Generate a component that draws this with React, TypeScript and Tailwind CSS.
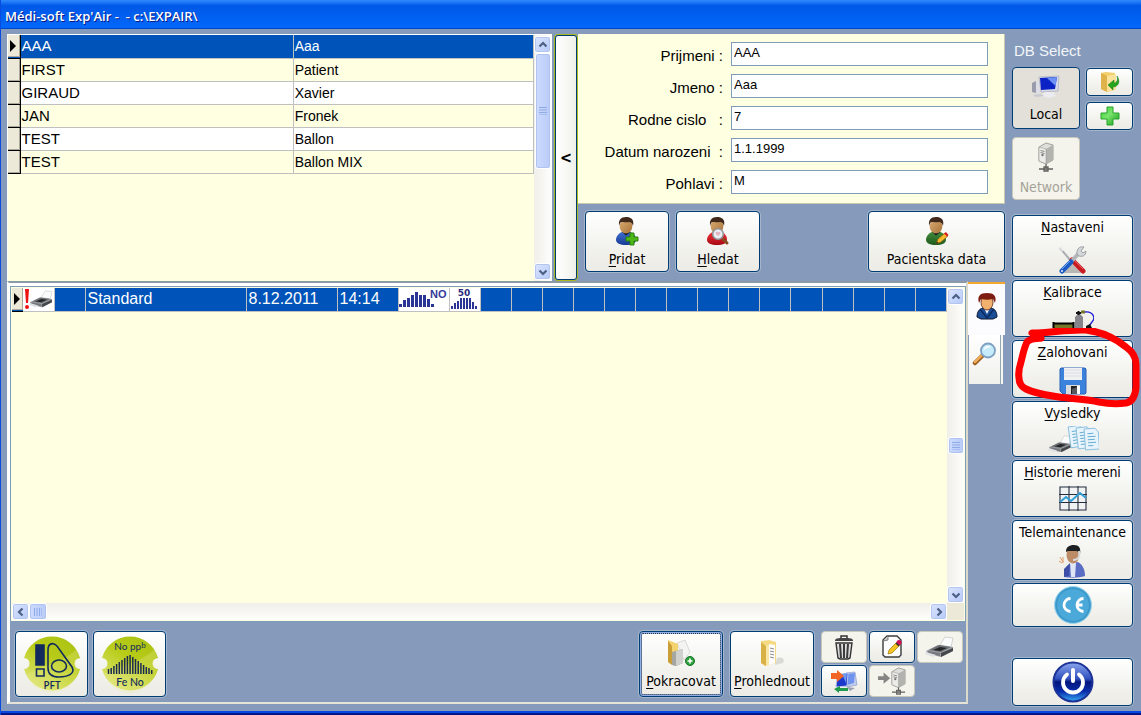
import type { ReactNode } from "react";

const UI_FONT = "font-['DejaVu_Sans_Condensed','DejaVu_Sans',sans-serif]";
const ARIAL = "font-['Liberation_Sans',Arial,sans-serif]";

/* ---------- icons ---------- */

function Person({ shirt, kind }: { shirt: "blue" | "red" | "green"; kind: "add" | "search" | "edit" }) {
  const dark = { blue: "#173a93", red: "#a80812", green: "#1d5a1c" }[shirt];
  const light = { blue: "#3f6fd0", red: "#ee3438", green: "#418a3a" }[shirt];
  return (
    <svg width="28" height="30" viewBox="0 0 28 30" aria-hidden="true">
      <defs>
        <linearGradient id={`shirt-${shirt}`} x1="0" y1="0" x2="0" y2="1">
          <stop offset="0" stopColor={light} />
          <stop offset="1" stopColor={dark} />
        </linearGradient>
        <linearGradient id="skin" x1="0" y1="0" x2="1" y2="1">
          <stop offset="0" stopColor="#d9ab72" />
          <stop offset="1" stopColor="#a87438" />
        </linearGradient>
      </defs>
      <path d="M3 24c0-4 3-7 6-8h8c4 1 6 4 6 8 0 3-4 5-10 5S3 27 3 24z" fill={`url(#shirt-${shirt})`} />
      <path d="M9 16l4 3.500 4.500-3.500z" fill="#151520" />
      <ellipse cx="13" cy="10.500" rx="6.300" ry="7" fill="url(#skin)" />
      <path d="M6.200 10C5 4 8 1 13 1s8.500 2.500 7 9c-1-3-2-4-4-4-3 .5-6 0-7.500 0-1.500.5-2 2-2.300 4z" fill="#40291a" />
      {kind === "add" && (
        <path d="M17 17h4v4h4v4h-4v4h-4v-4h-4v-4h4z" fill="#4db815" stroke="#267c05" strokeWidth=".9" />
      )}
      {kind === "search" && (
        <g>
          <path d="M19 23l4 4" stroke="#8b4b20" strokeWidth="3" strokeLinecap="round" />
          <circle cx="14" cy="18" r="5.300" fill="#eceff2" stroke="#8f9499" strokeWidth="1.600" />
          <path d="M11.500 16.500c1-1.500 2-.8 2.500 0 .7-1 2-1 2.500.2 0 1.500-1.500 2.300-2.500 3.300-1-1-2.500-2-2.500-3.500z" fill="#e3b4c0" />
        </g>
      )}
      {kind === "edit" && (
        <g>
          <path d="M13 28l2-5 7-6 3 3-7 6z" fill="#f8b62c" stroke="#8a6010" strokeWidth=".7" />
          <path d="M21 17.500l2-1.500 2.500 3-1.500 1.500z" fill="#d81f26" />
          <path d="M13 28l1-2.500 1.500 1.500z" fill="#222" />
        </g>
      )}
    </svg>
  );
}

function Computers() {
  return (
    <svg width="30" height="24" viewBox="0 0 30 24" aria-hidden="true">
      <path d="M1 8l4-2v12l-4-1z" fill="#999cab" />
      <path d="M5 6l4 1v11l-4 1z" fill="#dcdde6" />
      <path d="M8 2l20-1-1 15-17 1z" fill="#d5d9e9" stroke="#aeb1c4" strokeWidth=".8" />
      <path d="M9 3l17-1-2 12-14 1z" fill="#0b22c4" />
      <path d="M16 3l10-1-1.500 9z" fill="#6c90f3" />
      <path d="M14 17h8l3 4-7 2-8-2z" fill="#ececf0" />
      <path d="M2 20l8-1 3 2-8 1z" fill="#c9c9d0" />
    </svg>
  );
}

function Server() {
  return (
    <>
      <path d="M4 5l7-4 7 2v15l-7 4-7-3z" fill="#dededb" stroke="#8d8d8a" strokeWidth=".8" />
      <path d="M11 7l7-4v15l-7 4z" fill="#b2b2af" />
      <path d="M4 5l7 2v15l-7-3z" fill="#ebebe8" stroke="#8d8d8a" strokeWidth=".5" />
      <path d="M5.500 8.500l4 1M5.500 10.500l4 1" stroke="#898985" />
      <circle cx="7.500" cy="13" r="1.200" fill="#777" />
      <path d="M11 22v4M4 27h14M9 25h4v4H9z" stroke="#62625f" strokeWidth="1.300" fill="#c7c7c4" />
    </>
  );
}

function FolderArrow() {
  return (
    <svg width="20" height="22" viewBox="0 0 20 22" aria-hidden="true">
      <path d="M1 2l5-1 9 1v17l-8 2-6-3z" fill="#f1cf6d" />
      <path d="M1 2l6 3v16l-6-3z" fill="#dfb34a" />
      <path d="M7 5l9-2v15l-9 3z" fill="#fae29a" />
      <path d="M17 5c4 6 1 11-4 11v3l-5-5 6-5v3c3 0 4-3 3-7z" fill="#25a51d" stroke="#14750f" strokeWidth=".5" />
    </svg>
  );
}

function GreenPlus() {
  return (
    <svg width="20" height="20" viewBox="0 0 20 20" aria-hidden="true">
      <defs>
        <linearGradient id="gp" x1="0" y1="0" x2="1" y2="1">
          <stop offset="0" stopColor="#3ccc3c" />
          <stop offset=".45" stopColor="#79e46b" />
          <stop offset="1" stopColor="#149a1c" />
        </linearGradient>
      </defs>
      <path d="M7 1h6v6h6v6h-6v6H7v-6H1V7h6z" fill="url(#gp)" stroke="#27a32b" strokeLinejoin="round" />
    </svg>
  );
}

function Tools() {
  return (
    <svg width="30" height="28" viewBox="0 0 30 28" aria-hidden="true">
      <path d="M4 27l10-9 10 9z" fill="#77777a" opacity=".45" />
      <path d="M2 2l11 13" stroke="#a9adb3" strokeWidth="2" />
      <path d="M2 1l3 4" stroke="#e9e9ec" strokeWidth="2" />
      <path d="M14 14l11 11" stroke="#c81b22" strokeWidth="5" strokeLinecap="round" />
      <path d="M15 13l10 10" stroke="#ee6062" strokeWidth="1" />
      <path d="M22 6L12 17" stroke="#b2b5ba" strokeWidth="4" />
      <path d="M20 3c2-3 5-2 6-2l-3 4 2 2 3-2c0 5-4 6-7 5-2-1-3-4-1-7z" fill="#d4d6d9" stroke="#8e9196" strokeWidth=".8" />
      <path d="M13 16L4 25" stroke="#1c5ac4" strokeWidth="5" strokeLinecap="round" />
      <path d="M12 15l-8 8" stroke="#72a6f2" strokeWidth="1" />
      <circle cx="4" cy="25" r="1" fill="#eef" />
    </svg>
  );
}

function Gas() {
  return (
    <svg width="42" height="18" viewBox="0 0 42 18" aria-hidden="true">
      <path d="M2 14h19v4H2z" fill="#77752a" />
      <path d="M1 13.500h21M1.500 12v6M21.500 12v6" stroke="#000" strokeWidth="2" />
      <path d="M23 18V7l3-3h2l3 3v11z" fill="#84848a" />
      <path d="M24 3h5M26.500 1v4" stroke="#111" strokeWidth="2" />
      <path d="M29 2h4" stroke="#77752a" strokeWidth="3" />
      <path d="M33 2c8-1 11 6 7 10l-3 4" stroke="#1c1cd8" strokeWidth="1.300" fill="none" />
      <path d="M34 16l4-2 2 4h-6z" fill="#111" />
    </svg>
  );
}

function Floppy() {
  return (
    <svg width="28" height="28" viewBox="0 0 28 28" aria-hidden="true">
      <path d="M2 1h24l1 1v24l-1 1H4l-3-3V2z" fill="#3b82dd" stroke="#2a62b6" />
      <path d="M5 1h18v12H5z" fill="#f0f1f2" />
      <path d="M5 3h18M5 6h18M5 9h18" stroke="#dcdee1" />
      <path d="M7 18h14v9H7z" fill="#d9dbdd" />
      <path d="M12 19h6v8h-6z" fill="#222" />
      <path d="M13 22l5-2v7h-5z" fill="#55585c" />
      <path d="M18 19h3v8h-3z" fill="#fff" />
    </svg>
  );
}

function PrinterShape() {
  return (
    <>
      <path d="M15 9l5-8 8 1-2 9z" fill="#fbfbfc" stroke="#c2c3c7" strokeWidth=".7" />
      <path d="M1 15l12-6 15 2v4l-12 6-13-3z" fill="#9b9ea2" />
      <path d="M4 14l10-5 12 2-10 5z" fill="#6c6f73" />
      <path d="M8 14l7-3 7 1-7 3z" fill="#232527" />
      <path d="M16 17l12-5v3l-12 6z" fill="#45484b" />
      <path d="M3 15l12 2v3L3 17z" fill="#75787c" />
      <path d="M1 16l10 3-3 2-8-3z" fill="#dfe1e4" />
    </>
  );
}

function Results() {
  return (
    <svg width="52" height="26" viewBox="0 0 52 26" aria-hidden="true">
      <g transform="translate(1 9) scale(.82)">
        <PrinterShape />
      </g>
      {[0, 1, 2].map((i) => (
        <g key={i} transform={`translate(${21 + i * 8} ${i}) rotate(${-8 + i * 2})`}>
          <path d="M0 1h11l3 4v17H0z" fill="#e8f4fb" stroke="#86bddd" strokeWidth=".9" />
          <path d="M3 6h6M3 9h8M3 12h7M3 15h8M3 18h5" stroke="#67add3" />
        </g>
      ))}
    </svg>
  );
}

function ChartIcon() {
  return (
    <svg width="28" height="25" viewBox="0 0 28 25" aria-hidden="true">
      <rect x=".5" y=".5" width="27" height="24" fill="#f1f2f3" />
      <path d="M1 1h26v23H1zM10 0v25M19 0v25M0 8.500h28M0 16.500h28" fill="none" stroke="#242e3e" strokeWidth="1.100" />
      <path d="M1 16l6-5 5 4 9-8 6 5" fill="none" stroke="#2f9fd6" strokeWidth="2" />
    </svg>
  );
}

function Operator() {
  return (
    <svg width="28" height="34" viewBox="0 0 28 34" aria-hidden="true">
      <path d="M5 33c0-8 3-12 8-14l6-1c5 3 7 8 7 14-6 2-15 2-21 1z" fill="#5a6cc4" />
      <path d="M11 19h6l-1 14h-4z" fill="#dfe5f5" />
      <path d="M5 25l6-6-1 13-5 1z" fill="#3c4ea6" />
      <ellipse cx="14" cy="11" rx="6.500" ry="8.500" fill="#bd8c66" />
      <path d="M7 8c0-5 3-7 8-7 5 0 7 3 6 9l-3-3H9z" fill="#1d2023" />
      <path d="M20 7c1 5 0 9-6 9" stroke="#d8dadd" strokeWidth="2" fill="none" />
      <path d="M1 13l3 5M0 17l3 2M4 13v6" stroke="#e39b67" />
    </svg>
  );
}

function CeMark() {
  return (
    <svg width="38" height="38" viewBox="0 0 38 38" aria-hidden="true">
      <circle cx="19" cy="19" r="18.500" fill="#43a1d3" stroke="#9bd4e9" />
      <circle cx="19" cy="19" r="16.500" fill="#4ba9d9" stroke="#3a93c5" />
      <path d="M16.500 12.500a6.500 6.500 0 0 0 0 13M29.500 12.500a6.500 6.500 0 0 0 0 13M23.500 19h5" fill="none" stroke="#fff" strokeWidth="2.800" />
    </svg>
  );
}

function PowerMark() {
  return (
    <svg width="42" height="42" viewBox="0 0 42 42" aria-hidden="true">
      <defs>
        <linearGradient id="pw" x1="0" y1="0" x2="0" y2="1">
          <stop offset="0" stopColor="#8ba6ee" />
          <stop offset=".42" stopColor="#2f50be" />
          <stop offset=".5" stopColor="#04157c" />
          <stop offset=".75" stopColor="#0a2eae" />
          <stop offset="1" stopColor="#37aef5" />
        </linearGradient>
      </defs>
      <circle cx="21" cy="21" r="19.500" fill="url(#pw)" stroke="#1c3296" strokeWidth="2" />
      <path d="M15 13.500a10 10 0 1 0 12 0" fill="none" stroke="#fff" strokeWidth="3.800" strokeLinecap="round" />
      <path d="M21 9v11" stroke="#fff" strokeWidth="4" strokeLinecap="round" />
    </svg>
  );
}

function GreenDisc({ id, children }: { id: string; children: ReactNode }) {
  return (
    <svg width="60" height="60" viewBox="0 0 60 60" aria-hidden="true">
      <defs>
        <linearGradient id={id} x1="1" y1="0" x2=".3" y2="1">
          <stop offset="0" stopColor="#a9c012" />
          <stop offset=".5" stopColor="#b8cc18" />
          <stop offset="1" stopColor="#dce36e" />
        </linearGradient>
      </defs>
      <path d="M2 24A29 29 0 0 1 58 24a5 5 0 0 0 0 11A29 29 0 0 1 2 35a5 5 0 0 0 0-11z" fill={`url(#${id})`} />
      <path d="M4 40C20 32 42 28 55 15l2 8c-3 2-4 8 0 12-6 30-44 32-53 5z" fill="#eff0a0" opacity=".25" />
      {children}
    </svg>
  );
}

function PftDisc() {
  return (
    <GreenDisc id="pft">
      <g fill="none" stroke="#132b5c" strokeWidth="1.600">
        <path d="M14 11h8v20h-8z" fill="#132b5c" />
        <path d="M14.500 35h7.500v7h-7.500z" />
        <path d="M26 16c0-7 5-8 9-4l15 21c4 7-5 10-13 10-8 0-11-3-11-9z" />
        <ellipse cx="37" cy="32" rx="7.500" ry="6" />
      </g>
      <text x="30" y="55" textAnchor="middle" fontFamily="Open Sans, sans-serif" fontSize="10" fontWeight="600" fill="#132b5c">PFT</text>
    </GreenDisc>
  );
}

function FenoDisc() {
  const bars = [5, 6, 8, 10, 12, 14, 16, 18, 19, 17, 15, 13, 11, 9, 7, 6, 4];
  return (
    <GreenDisc id="feno">
      <text x="30" y="16" textAnchor="middle" fontFamily="Lato, sans-serif" fontSize="10" fill="#132b5c">
        No pp<tspan fontSize="8" dy="-2">b</tspan>
      </text>
      {bars.map((h, i) => (
        <path key={i} d={`M${8.500 + i * 2.700} 40v${-h}`} stroke="#1b2b50" strokeWidth="1.500" />
      ))}
      <text x="30" y="52" textAnchor="middle" fontFamily="Lato, sans-serif" fontSize="10.500" fontWeight="500" fill="#132b5c">Fe No</text>
    </GreenDisc>
  );
}

function FolderDocs({ plus }: { plus?: boolean }) {
  return (
    <svg width="30" height="28" viewBox="0 0 30 28" aria-hidden="true">
      {plus ? (
        <>
          <path d="M11 4l8-3 5 12-6 8z" fill="#f4f4f2" stroke="#cbcbc8" strokeWidth=".7" />
          <path d="M2 1l10 4v20l-3 2-7-4z" fill="#f3d36e" />
          <path d="M2 2l4 5v19l-4-3z" fill="#c99e37" />
          <path d="M6 13l11-3v14l-7 3-4-1z" fill="#a5a5a2" />
          <path d="M10 12l7-2v14l-7 3z" fill="#d0d0cc" />
          <circle cx="24" cy="22" r="4.500" fill="#2ca23b" stroke="#187428" />
          <path d="M24 19.500v5M21.500 22h5" stroke="#fff" strokeWidth="1.600" />
        </>
      ) : (
        <>
          <path d="M20 19c6-2 8 2 6 5l-8 2z" fill="#d9d9d6" />
          <path d="M4 2l8-1 7 2v21l-11 3-4-3z" fill="#f4db83" />
          <path d="M4 3l5 4v20l-5-3z" fill="#d9b247" />
          <path d="M9 7l3-1v20l-3 1z" fill="#f9e7a6" />
          <path d="M12 5l6 1v18l-6 2z" fill="#fff" />
          <path d="M13 9l4 1M13 12l4 1M13 15l4 1M13 18l4 1" stroke="#888" />
        </>
      )}
    </svg>
  );
}

function Trash() {
  return (
    <svg width="20" height="25" viewBox="0 0 20 25" aria-hidden="true">
      <path d="M7 3V1h6v2" fill="none" stroke="#333" strokeWidth="1.500" />
      <path d="M1 6c0-3 3-3 9-3s9 0 9 3z" fill="#444" />
      <path d="M2 8h16l-2 15-2 1H6l-2-1z" fill="#ddd" stroke="#333" strokeWidth="1.400" />
      <path d="M6 9l1 14M10 9v14M14 9l-1 14" stroke="#3b3b3b" strokeWidth="2" />
    </svg>
  );
}

function NotePen() {
  return (
    <svg width="21" height="24" viewBox="0 0 21 24" aria-hidden="true">
      <path d="M5 1h10l4 4v15l-2 2H3l-2-2V5z" fill="#fdfdfd" stroke="#3b3b3b" strokeWidth="1.400" />
      <path d="M1 6l5-1V1" fill="#ccc" stroke="#666" strokeWidth=".8" />
      <path d="M6 19l1-4L15 7l3 3-8 8z" fill="#f7c521" stroke="#9c7509" strokeWidth=".7" />
      <circle cx="17" cy="7.500" r="2.500" fill="#cf1058" />
      <path d="M14 8l3 3" stroke="#333" strokeWidth="1.500" />
    </svg>
  );
}

function Transfer() {
  return (
    <svg width="28" height="25" viewBox="0 0 28 25" aria-hidden="true">
      <path d="M16 4l9-1 2 13-10 2z" fill="#c2cdec" stroke="#8b9dcf" strokeWidth=".7" />
      <path d="M17 5l8-1-1 10-7 2z" fill="#6d93ee" />
      <path d="M7 6l11-2-1 13-11 1z" fill="#1c39cb" stroke="#bac5ea" />
      <path d="M12 5l5-1-1 10z" fill="#6f9cf2" />
      <path d="M1 4h6V1l7 6-7 6v-3H1z" fill="#f16624" />
      <path d="M4 20l6-3v2h8v3H9v2z" fill="#229a4b" />
      <path d="M17 18l8 1-5 3z" fill="#9aa1af" />
    </svg>
  );
}

function FlowBars({ label, heights, wide }: { label: string; heights: number[]; wide?: boolean }) {
  return (
    <svg className="block" width={wide ? 50 : 30} height="22" viewBox={wide ? "0 0 50 22" : "0 0 30 22"} role="img" aria-label={label}>
      {heights.map((h, i) =>
        wide ? (
          <rect key={i} x={i * 4} y={19 - h} width="3" height={h} fill="#2b3595" />
        ) : (
          <rect key={i} x={1 + i * 3} y={21 - h} width="2" height={h} fill="#2b3595" />
        ),
      )}
      {wide ? (
        <text x="31" y="10" fontFamily="Liberation Sans, sans-serif" fontSize="11" fontWeight="700" fill="#333a99">{label}</text>
      ) : (
        <text x="14" y="8" textAnchor="middle" fontFamily="DejaVu Sans, sans-serif" fontSize="9" fontWeight="700" fill="#2b2b7c">{label}</text>
      )}
    </svg>
  );
}

/* ---------- controls ---------- */

const BTN =
  "flex items-center rounded-[4px] border border-[#003c74] bg-linear-to-b from-white via-[#f4f4f0] to-[#ecebe5] shadow-[0_0_0_1px_#a5b6ca] text-[14px] leading-[18px] text-black";
const BTN_OFF =
  "flex items-center rounded-[4px] border border-[#c9c7ba] bg-[#f4f3ec] text-[14px] leading-[18px] text-[#a5a398]";

function Key({ text }: { text: string }) {
  return (
    <span className="whitespace-nowrap">
      <span className="underline underline-offset-2">{text[0]}</span>
      {text.slice(1)}
    </span>
  );
}

const SB_BTN =
  "flex h-[17px] w-[17px] shrink-0 items-center justify-center rounded-[3px] border border-white bg-linear-to-br from-[#dbe5ff] to-[#b6c9f8] shadow-[inset_0_0_0_1px_#b4c6ee]";

function Arrow({ dir, label }: { dir: "up" | "down" | "left" | "right"; label: string }) {
  const d = {
    up: "M1.500 6.500l3.500-3.500 3.500 3.500",
    down: "M1.500 3.500l3.500 3.500 3.500-3.500",
    left: "M6.500 1.500l-3.500 3.500 3.500 3.500",
    right: "M3.500 1.500l3.500 3.500-3.500 3.500",
  }[dir];
  return (
    <button type="button" aria-label={label} className={SB_BTN}>
      <svg width="10" height="10" viewBox="0 0 10 10" aria-hidden="true">
        <path d={d} fill="none" stroke="#4d6185" strokeWidth="2.200" />
      </svg>
    </button>
  );
}

function Grip({ vertical }: { vertical?: boolean }) {
  return (
    <svg width="8" height="8" viewBox="0 0 8 8" aria-hidden="true">
      <path d={vertical ? "M.5 0v8M3 0v8M5.500 0v8M8 0v8" : "M0 .5h8M0 3h8M0 5.500h8M0 8h8"} stroke="#8fabe6" strokeWidth="1" />
    </svg>
  );
}

const THUMB =
  "flex shrink-0 items-center justify-center rounded-[3px] border border-white bg-linear-to-r from-[#cddbff] to-[#b9cbf8] shadow-[inset_0_0_0_1px_#b0c2ee]";

function Marker({ active }: { active?: boolean }) {
  return (
    <span className="flex h-[22px] items-center justify-center border-r border-b border-[#aca899] bg-[#ece9d8]">
      {active && (
        <svg width="6" height="12" viewBox="0 0 6 12" aria-label="Vybrano">
          <path d="M0 0l6 6-6 6z" fill="#000" />
        </svg>
      )}
    </span>
  );
}

/* ---------- sections ---------- */

const patients = [
  ["AAA", "Aaa"],
  ["FIRST", "Patient"],
  ["GIRAUD", "Xavier"],
  ["JAN", "Fronek"],
  ["TEST", "Ballon"],
  ["TEST", "Ballon MIX"],
];

function PatientList() {
  return (
    <section className="flex min-w-0 flex-1 border-t border-l border-white bg-[#ffffe1]">
      <div className="min-w-0 flex-1">
        <table aria-label="Pacienti" className={`w-full table-fixed border-collapse ${ARIAL}`}>
          <colgroup>
            <col className="w-[12px]" />
            <col className="w-[52%]" />
            <col />
          </colgroup>
          <tbody>
            {patients.map(([last, first], i) => (
              <tr
                key={i}
                className={
                  i === 0 ? "h-[23px] bg-[#0054b9] text-white" : i % 2 ? "h-[23px] bg-[#ffffe1]" : "h-[23px] bg-white"
                }
              >
                <td className="border-r border-b border-black p-0">
                  <Marker active={i === 0} />
                </td>
                <td className="border-r border-b border-[#c0c0c0] p-0 pl-px text-[15px] leading-[22px]">{last}</td>
                <td className="border-r border-b border-[#c0c0c0] p-0 pl-px text-[14px] leading-[22px]">{first}</td>
              </tr>
            ))}
          </tbody>
        </table>
      </div>
      <div className="flex w-[18px] flex-col items-center border-r border-white bg-linear-to-r from-[#f0efe9] to-[#fefefb] pt-px pb-px">
        <Arrow dir="up" label="Nahoru" />
        <div className={`h-[116px] w-[16px] ${THUMB}`}>
          <Grip />
        </div>
        <div className="flex-1" />
        <Arrow dir="down" label="Dolu" />
      </div>
    </section>
  );
}

const fields = [
  { id: "prijmeni", label: "Prijmeni :", value: "AAA" },
  { id: "jmeno", label: "Jmeno :", value: "Aaa" },
  { id: "rodne", label: "Rodne cislo   :", value: "7" },
  { id: "datum", label: "Datum narozeni  :", value: "1.1.1999" },
  { id: "pohlavi", label: "Pohlavi :", value: "M" },
];

function PatientForm() {
  return (
    <section className="flex w-[427px] shrink-0 flex-col">
      <div className={`flex h-[170px] flex-col gap-2 border-r border-b border-[#c9c7b0] bg-[#ffffe1] pt-2 pr-4 ${ARIAL}`}>
        {fields.map((f) => (
          <div key={f.id} className="flex h-6 items-center gap-2">
            <label htmlFor={f.id} className="flex-1 pt-1 text-right text-[15px] leading-5 whitespace-pre">
              {f.label}
            </label>
            <input
              id={f.id}
              defaultValue={f.value}
              className="h-6 w-[257px] rounded-none border border-[#7f9db9] bg-white px-[2px] pb-[4px] text-[13px] outline-none"
            />
          </div>
        ))}
      </div>
      <div className="flex gap-[7px] pt-[7px] pl-[7px]">
        <button type="button" className={`${BTN} h-[61px] w-[84px] flex-col justify-between pt-1 pb-[3px]`}>
          <Person shirt="blue" kind="add" />
          <Key text="Pridat" />
        </button>
        <button type="button" className={`${BTN} h-[61px] w-[84px] flex-col justify-between pt-1 pb-[3px]`}>
          <Person shirt="red" kind="search" />
          <Key text="Hledat" />
        </button>
        <button type="button" className={`${BTN} ml-auto h-[61px] w-[137px] flex-col justify-between pt-1 pb-[3px]`}>
          <Person shirt="green" kind="edit" />
          <span>Pacientska data</span>
        </button>
      </div>
    </section>
  );
}

const CELL = "border-r border-b border-[#c0c0c0] p-0";
const emptyCells = Array.from({ length: 15 }, (_, i) => i);

function Measurements() {
  return (
    <div className="flex min-h-0 flex-1 flex-col border border-[#7f9db9] bg-[#ffffe1] p-px">
      <div className="flex flex-1">
        <div className="min-w-0 flex-1">
          <table aria-label="Mereni" className={`w-full table-fixed border-collapse ${ARIAL}`}>
            <colgroup>
              <col className="w-[11px]" />
              <col className="w-[31px]" />
              <col className="w-[31px]" />
              <col className="w-[161px]" />
              <col className="w-[91px]" />
              <col className="w-[61px]" />
              <col className="w-[51px]" />
              <col className="w-[31px]" />
              {emptyCells.map((i) => (
                <col key={i} />
              ))}
            </colgroup>
            <tbody>
              <tr className="h-[23px] bg-[#0054b9] text-[16px] leading-[22px] text-white">
                <td className="border-b border-black p-0">
                  <Marker active />
                </td>
                <td className={`${CELL} bg-white`}>
                  <svg className="block" width="30" height="22" viewBox="0 0 30 22" role="img" aria-label="Nevytisteno">
                    <path d="M2 1h4l-1 14H3z" fill="#ee1313" />
                    <circle cx="4" cy="19" r="2" fill="#ee1313" />
                    <g transform="translate(6 2) scale(.82)">
                      <PrinterShape />
                    </g>
                  </svg>
                </td>
                <td className={CELL} />
                <td className={`${CELL} pl-[2px]`}>Standard</td>
                <td className={`${CELL} pl-[2px]`}>8.12.2011</td>
                <td className={`${CELL} pl-[2px]`}>14:14</td>
                <td className={`${CELL} bg-white`}>
                  <FlowBars label="NO" wide heights={[3, 7, 9, 12, 15, 12, 12, 8, 3]} />
                </td>
                <td className={`${CELL} bg-white`}>
                  <FlowBars label="50" heights={[3, 6, 8, 11, 11, 11, 11, 7, 3]} />
                </td>
                {emptyCells.map((i) => (
                  <td key={i} className={CELL} />
                ))}
              </tr>
            </tbody>
          </table>
        </div>
        <div className="flex w-[17px] flex-col items-center bg-linear-to-r from-[#f0efe9] to-[#fefefb]">
          <Arrow dir="up" label="Nahoru" />
          <div className="flex-1" />
          <div className={`h-[17px] w-[16px] ${THUMB}`}>
            <Grip />
          </div>
          <div className="flex-1" />
          <Arrow dir="down" label="Dolu" />
        </div>
      </div>
      <div className="flex h-[17px]">
        <div className="flex flex-1 bg-linear-to-b from-[#f0efe9] to-[#fefefb]">
          <Arrow dir="left" label="Vlevo" />
          <div className={`h-[17px] w-[18px] ${THUMB}`}>
            <Grip vertical />
          </div>
          <div className="flex-1" />
          <Arrow dir="right" label="Vpravo" />
        </div>
        <div className="w-[17px] bg-[#ece9d8]" />
      </div>
    </div>
  );
}

function Toolbar() {
  return (
    <div className="flex h-[80px] shrink-0 items-start pt-[9px] pr-[3px] pl-[5px]">
      <div className="flex gap-[5px]">
        <button type="button" aria-label="PFT" className={`${BTN} h-[66px] w-[73px] justify-center`}>
          <PftDisc />
        </button>
        <button type="button" aria-label="Fe No" className={`${BTN} h-[66px] w-[73px] justify-center`}>
          <FenoDisc />
        </button>
      </div>
      <div className="ml-auto flex gap-[7px]">
        <button
          type="button"
          className={`${BTN} h-[66px] w-[84px] flex-col justify-between pt-[7px] pb-[6px] ring-2 ring-[#8fb0e8] outline-1 -outline-offset-3 outline-[#333] outline-dotted ring-inset`}
        >
          <FolderDocs plus />
          <Key text="Pokracovat" />
        </button>
        <button type="button" className={`${BTN} h-[66px] w-[84px] flex-col justify-between pt-[7px] pb-[6px]`}>
          <FolderDocs />
          <Key text="Prohlednout" />
        </button>
        <div className="grid grid-cols-[46px_46px_46px] grid-rows-[32px_32px] gap-[2px]">
          <button type="button" disabled aria-label="Smazat" className={`${BTN_OFF} justify-center`}>
            <Trash />
          </button>
          <button type="button" aria-label="Upravit" className={`${BTN} justify-center`}>
            <NotePen />
          </button>
          <button type="button" disabled aria-label="Tisk" className={`${BTN_OFF} justify-center`}>
            <svg width="30" height="22" viewBox="0 0 30 22" aria-hidden="true">
              <PrinterShape />
            </svg>
          </button>
          <button type="button" aria-label="Prenos" className={`${BTN} justify-center`}>
            <Transfer />
          </button>
          <button type="button" disabled aria-label="Na server" className={`${BTN_OFF} justify-center`}>
            <svg width="30" height="28" viewBox="0 0 30 30" aria-hidden="true">
              <path d="M0 10h6V6l7 6-7 6v-4H0z" fill="#858583" />
              <g transform="translate(11 0)">
                <Server />
              </g>
            </svg>
          </button>
        </div>
      </div>
    </div>
  );
}

function Tabs() {
  return (
    <div role="tablist" aria-label="Pohled" className="flex w-[37px] shrink-0 flex-col items-start pt-px">
      <button
        type="button"
        role="tab"
        aria-selected="true"
        aria-label="Pacient"
        className="flex h-[53px] w-[37px] items-center justify-center border-t-2 border-[#f5a62c] bg-[#fcfcfe] pb-2"
      >
        <svg width="22" height="28" viewBox="0 0 22 28" aria-hidden="true">
          <path d="M1 25c0-5 2-8 6-9h8c4 1 6 4 6 9l-4 2H5z" fill="#1b4e96" stroke="#0a1730" />
          <path d="M8 16l3 6 3-6z" fill="#f1f4fa" />
          <path d="M4 17l7 9 7-9" fill="none" stroke="#0c2a62" strokeWidth="1.400" />
          <ellipse cx="11" cy="10.500" rx="6" ry="7.500" fill="#f0b06e" stroke="#5a2413" strokeWidth=".8" />
          <path d="M3 11C1 4 4 1 11 1s10 3 8 10l-2-4c-4 1-8 1-12 0z" fill="#7d1d12" />
        </svg>
      </button>
      <button
        type="button"
        role="tab"
        aria-selected="false"
        aria-label="Hledani"
        className="ml-px flex h-[49px] w-[34px] items-center justify-center border-r-2 border-[#f6f6f2] bg-linear-to-b from-white to-[#f0f0ec] pb-3 shadow-[inset_-1px_0_0_#91a7b4]"
      >
        <svg width="26" height="24" viewBox="0 0 26 24" aria-hidden="true">
          <path d="M10 14l-7 7" stroke="#9a5d20" strokeWidth="4.500" strokeLinecap="round" />
          <path d="M10 13l-7 7" stroke="#eeac5a" strokeWidth="2.500" strokeLinecap="round" />
          <circle cx="16" cy="8.500" r="7" fill="#c6ecfb" stroke="#7e9fc2" strokeWidth="1.800" />
          <path d="M11.500 8c1-4 5-5 8-3-3 0-5 1-8 3z" fill="#fff" />
        </svg>
      </button>
    </div>
  );
}

const MENU = `${BTN} w-full flex-col justify-between pt-[2px]`;

function Sidebar() {
  return (
    <aside className="flex w-[136px] shrink-0 flex-col pr-2 pb-[5px] pl-[7px]">
      <h2 className={`pt-[13px] pl-[2px] text-[15px] leading-[18px] text-[#f2f5fa] ${ARIAL}`}>DB Select</h2>
      <div className="mt-[7px] flex items-start gap-[6px]">
        <div className="flex flex-col gap-2">
          <button
            type="button"
            aria-pressed="true"
            className="flex h-[62px] w-[68px] flex-col items-center justify-between rounded-[4px] border border-[#003c74] bg-[#e2e0d8] pt-[7px] pb-[5px] text-[14px] leading-[18px]"
          >
            <Computers />
            Local
          </button>
          <button type="button" disabled className={`${BTN_OFF} h-[63px] w-[68px] flex-col justify-between pt-1 pb-[3px]`}>
            <svg width="22" height="31" viewBox="0 0 22 31" aria-hidden="true">
              <Server />
            </svg>
            Network
          </button>
        </div>
        <div className="flex flex-1 flex-col gap-[6px] pt-px">
          <button type="button" aria-label="Otevrit databazi" className={`${BTN} h-7 justify-center`}>
            <FolderArrow />
          </button>
          <button type="button" aria-label="Pridat databazi" className={`${BTN} h-7 justify-center`}>
            <GreenPlus />
          </button>
        </div>
      </div>
      <nav aria-label="Menu" className="mt-[15px] flex flex-col gap-[3px]">
        <button type="button" className={`${MENU} h-[62px] pb-[2px]`}>
          <Key text="Nastaveni" />
          <Tools />
        </button>
        <button type="button" className={`${MENU} h-[57px] pb-[8px]`}>
          <Key text="Kalibrace" />
          <Gas />
        </button>
        <div className="relative">
          <button type="button" className={`${MENU} h-[58px] pb-[2px]`}>
            <Key text="Zalohovani" />
            <Floppy />
          </button>
          <svg
            className="pointer-events-none absolute -top-3 left-0"
            width="128"
            height="80"
            viewBox="0 0 128 80"
            aria-hidden="true"
          >
            <path
              d="M29 10L20 5C38 5 56 1 74 2C92 4 104 11 114 19C121 24 124 29 124 36V60C123 68 120 74 114 75C106 76 97 76 87 74C74 71 60 71 47 69C34 67 24 66 14 61C8 58 7 54 7 50C6 44 7 40 9 34C11 26 12 20 15 14C19 10 24 11 29 10"
              fill="none"
              stroke="#ff0000"
              strokeWidth="7"
              strokeLinejoin="round"
              strokeLinecap="round"
            />
          </svg>
        </div>
        <button type="button" className={`${MENU} h-[56px] pb-[4px]`}>
          <Key text="Vysledky" />
          <Results />
        </button>
        <button type="button" className={`${MENU} h-[57px] pb-[5px]`}>
          <Key text="Historie mereni" />
          <ChartIcon />
        </button>
        <button type="button" className={`${MENU} h-[60px] pb-[1px]`}>
          <span>Telemaintenance</span>
          <Operator />
        </button>
        <button type="button" aria-label="CE" className={`${BTN} h-[44px] w-full justify-center`}>
          <CeMark />
        </button>
      </nav>
      <button type="button" aria-label="Konec" className={`${BTN} mt-auto h-[48px] w-full justify-center`}>
        <PowerMark />
      </button>
    </aside>
  );
}

export default function App() {
  return (
    <div className={`flex min-h-screen flex-col border-l border-[#0a4ce0] bg-[#869bbb] text-black ${UI_FONT}`}>
      <header className="flex h-[29px] shrink-0 items-center bg-linear-to-b from-[#2f8bff] via-[#0058e6] via-20% to-[#0068fc] pt-[3px] pl-1 shadow-[inset_0_-1px_0_#0046c8]">
        <h1 className="font-['Open_Sans','Noto_Sans',sans-serif] text-[13px] leading-4 font-semibold whitespace-pre text-white [text-shadow:1px_1px_0_#0a1883]">
          {"Médi-soft Exp'Air -  - c:\\EXPAIR\\"}
        </h1>
      </header>
      <div className="flex flex-1">
        <main className="flex min-w-0 flex-1 flex-col pt-[5px] pb-[7px] pl-[6px]">
          <div className="flex h-[247px] shrink-0">
            <PatientList />
            <button
              type="button"
              aria-label="Skryt panel"
              className="my-px mr-px ml-[3px] flex w-[22px] shrink-0 items-center justify-center rounded-[3px] border border-[#003c74] bg-linear-to-r from-white to-[#f0f0ea] text-[16px] font-bold shadow-[0_0_0_1px_#a9b81c]"
            >
              &lt;
            </button>
            <PatientForm />
          </div>
          <div className="flex flex-1">
            <section className="flex min-w-0 flex-1 flex-col border-t-2 border-r-2 border-b-2 border-l-2 border-t-[#8c9aa5] border-r-[#dcdacb] border-b-[#e6e4d6] border-l-white">
              <div className="flex flex-1 flex-col border-t-[3px] border-l border-t-white border-l-white">
                <Measurements />
                <Toolbar />
              </div>
            </section>
            <Tabs />
          </div>
        </main>
        <Sidebar />
      </div>
      <div className="h-1 shrink-0 border-t-2 border-[#0a48e0] bg-[#00188c]" />
    </div>
  );
}
